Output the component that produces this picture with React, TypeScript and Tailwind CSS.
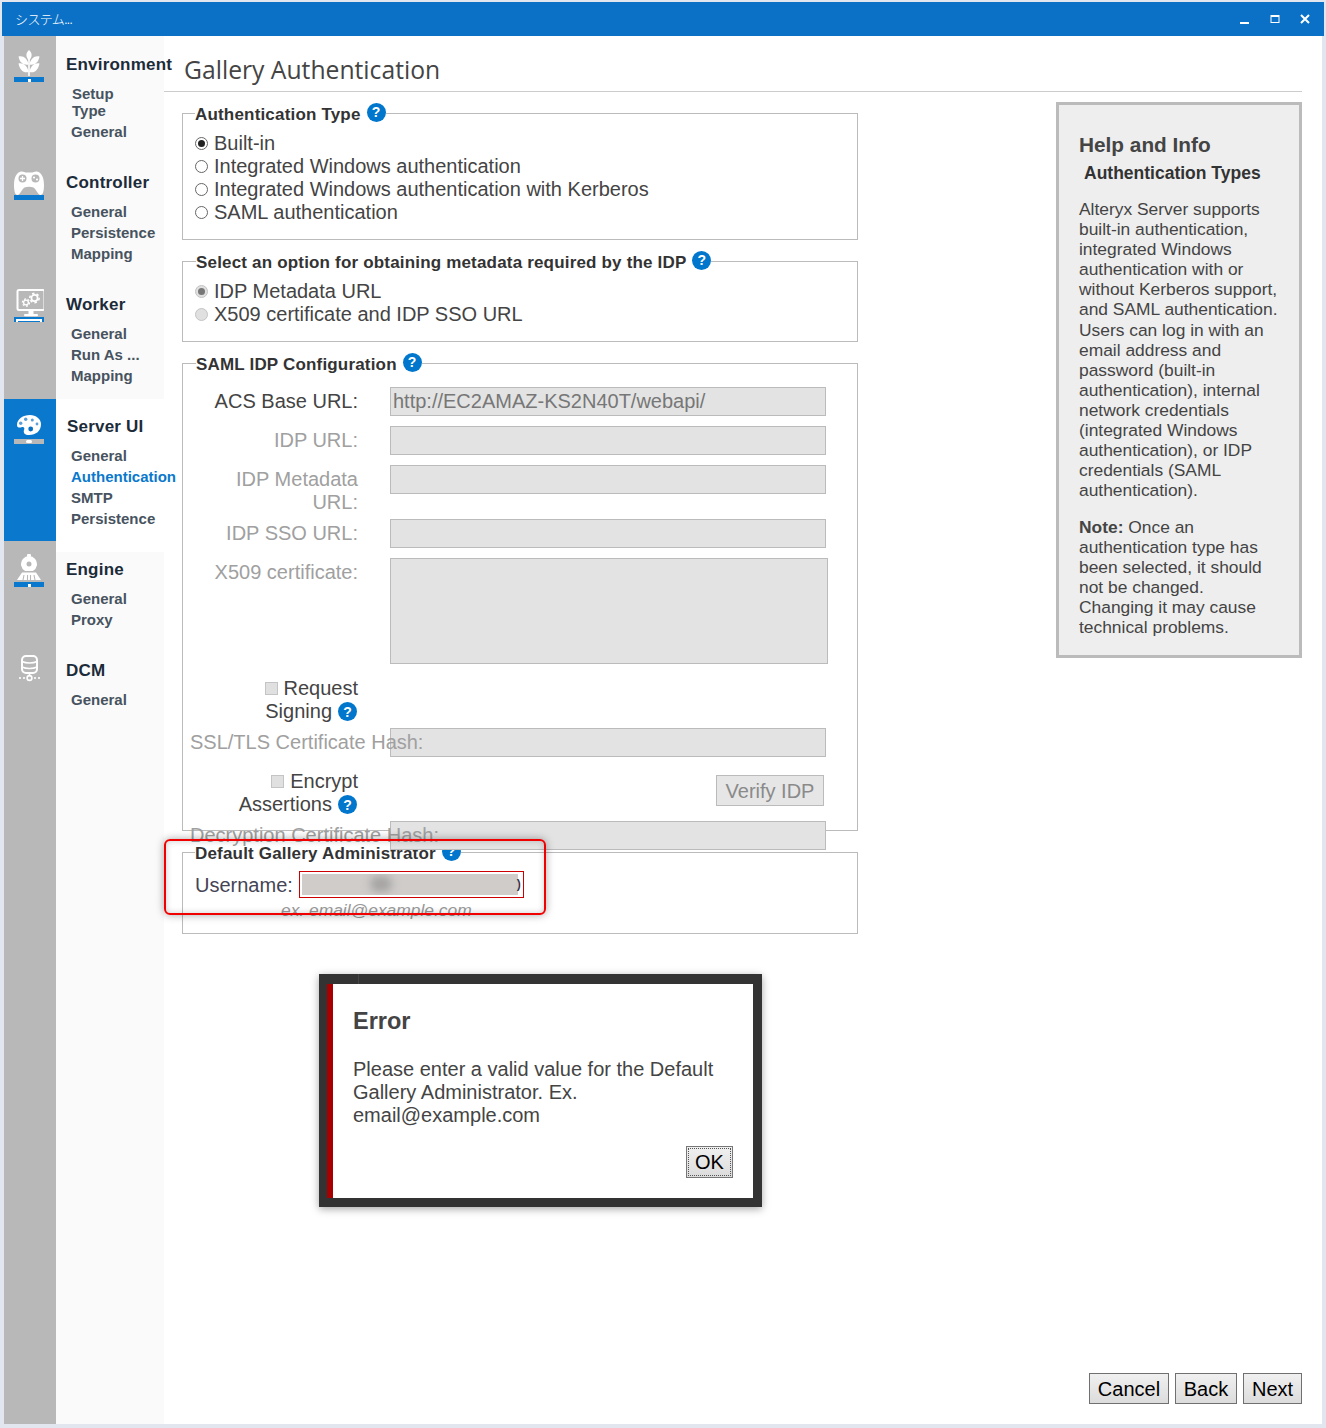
import type { ReactNode } from "react";

const FONT = "font-['Liberation_Sans',Arial,sans-serif]";

function PlantIcon() {
  return (
    <svg width="30" height="27" viewBox="0 0 30 27" fill="white">
      <rect x="14.2" y="6" width="1.6" height="20" />
      <path d="M15 0 C18.5 3 18.5 7 15 10.5 C11.5 7 11.5 3 15 0Z" />
      <path d="M4.5 6.5 C9 5 13.5 8.5 14.6 14.5 C9.5 15.5 5.5 12.5 4.5 6.5Z" />
      <path d="M25.5 6.5 C21 5 16.5 8.5 15.4 14.5 C20.5 15.5 24.5 12.5 25.5 6.5Z" />
      <path d="M4.5 13.5 C9 12.5 13.5 16 14.6 22 C9.5 23.5 5.5 19.5 4.5 13.5Z" />
      <path d="M25.5 13.5 C21 12.5 16.5 16 15.4 22 C20.5 23.5 24.5 19.5 25.5 13.5Z" />
    </svg>
  );
}

function PadIcon() {
  return (
    <svg width="30" height="24" viewBox="0 0 30 24">
      <path
        fill="white"
        d="M7 .5 C9 0 11 1.5 12.5 1.5 H17.5 C19 1.5 21 0 23 .5 C27 1 30 6 30 14 C30 20 29 24 26.5 24 C24 24 22 18 19.5 16.5 C17 15.5 13 15.5 10.5 16.5 C8 18 6 24 3.5 24 C1 24 0 20 0 14 C0 6 3 1 7 .5Z"
      />
      <circle cx="8.5" cy="7.5" r="4" fill="#b8b8b8" />
      <circle cx="21.5" cy="7.5" r="4" fill="#b8b8b8" />
      <path d="M6 7.5 H11 M8.5 5 V10" stroke="white" strokeWidth="1.3" />
      <circle cx="20" cy="6.5" r="1.1" fill="white" />
      <circle cx="23" cy="8.5" r="1.1" fill="white" />
    </svg>
  );
}

function Gear({ x, y, r }: { x: number; y: number; r: number }) {
  return (
    <g fill="none" stroke="white">
      <circle cx={x} cy={y} r={r} strokeWidth={r * 0.55} />
      <circle cx={x} cy={y} r={r + r * 0.5} strokeWidth={r * 0.5} strokeDasharray={`${r * 0.8} ${r * 0.72}`} />
    </g>
  );
}

function MonitorIcon() {
  return (
    <svg width="30" height="28" viewBox="0 0 30 28">
      <rect x="3.5" y="1" width="27" height="20" rx="1.5" fill="none" stroke="white" strokeWidth="2" />
      <rect x="14.5" y="22" width="5" height="3" fill="white" />
      <rect x="10" y="25" width="14" height="2.2" rx="1" fill="white" />
      <Gear x={20.5} y={9} r={3.1} />
      <Gear x={12} y={13.5} r={2.4} />
    </svg>
  );
}

function PaletteIcon() {
  return (
    <svg width="30" height="22" viewBox="-3 0 30 22">
      <path
        fill="white"
        d="M13 0 C6 0 0 4 0 10 C0 13 3 13 5 12 C7 11.5 8 13 7 15 C6 18 8 20 12 20 C19 20 24 16 24 9 C24 4 19 0 13 0Z"
      />
      <circle cx="3.7" cy="8.3" r="1.7" fill="#5a9fd8" />
      <circle cx="8.7" cy="4.3" r="1.7" fill="#5a9fd8" />
      <circle cx="15.3" cy="5" r="1.5" fill="#5a9fd8" />
      <circle cx="20" cy="9" r="1.4" fill="#5a9fd8" />
      <circle cx="13.7" cy="14" r="2.4" fill="#0a70c4" />
    </svg>
  );
}

function TrainIcon() {
  return (
    <svg width="30" height="28" viewBox="-3 0 30 28">
      <rect x="10" y="0" width="4" height="3" rx="1" fill="white" />
      <path d="M8.1 17 A8 8 0 1 1 15.9 17 Z" fill="white" />
      <circle cx="12" cy="10" r="2.5" fill="#b8b8b8" />
      <path d="M5 18.5 H19 L24 26 H0Z" fill="white" />
      <path d="M7 21 L6 26 M10.5 21 V26 M13.5 21 V26 M17 21 L18 26" stroke="#b8b8b8" strokeWidth="1.1" />
    </svg>
  );
}

function DbIcon() {
  return (
    <svg width="30" height="27" viewBox="-3 0 30 27" fill="none" stroke="white">
      <rect x="5" y="1" width="15" height="17" rx="4" strokeWidth="2" />
      <path d="M5 6.5 C9 8.5 16 8.5 20 6.5 M5 12 C9 14 16 14 20 12" strokeWidth="1.6" />
      <path d="M12.5 18 V21" strokeWidth="1.6" />
      <circle cx="12.5" cy="23" r="2.4" strokeWidth="1.6" />
      <g fill="white" stroke="none">
        <circle cx="3" cy="23" r="1.1" />
        <circle cx="7" cy="23" r="1.1" />
        <circle cx="18" cy="23" r="1.1" />
        <circle cx="22" cy="23" r="1.1" />
      </g>
    </svg>
  );
}

function RailBar({ kind, gray }: { kind: "none" | "dot" | "screen" | "ellipse"; gray?: boolean }) {
  return (
    <div className={`relative h-[5px] w-[30px] overflow-hidden ${gray ? "bg-[#b8b8b8]" : "bg-[#0a78cc]"}`}>
      {kind === "dot" && <div className="mx-auto mt-[2px] h-[3px] w-[3px] bg-white" />}
      {kind === "ellipse" && <div className="mx-auto mt-[1px] h-[3px] w-[6px] rounded-full bg-white" />}
      {kind === "screen" && <div className="mx-auto mt-[2px] h-[6px] w-[26px] border-2 border-white" />}
    </div>
  );
}

type Group = {
  title: string;
  height: string;
  railPad: string;
  navPad: string;
  icon: ReactNode;
  bar?: "none" | "dot" | "screen" | "ellipse";
  items: string[];
};

const groups: Group[] = [
  { title: "Environment", height: "h-[122px]", railPad: "pt-[14px]", navPad: "pt-[19px]", icon: <PlantIcon />, bar: "dot", items: ["Setup Type", "General"] },
  { title: "Controller", height: "h-[122px]", railPad: "pt-[13px]", navPad: "pt-[15px]", icon: <PadIcon />, bar: "none", items: ["General", "Persistence", "Mapping"] },
  { title: "Worker", height: "h-[119px]", railPad: "pt-[9px]", navPad: "pt-[15px]", icon: <MonitorIcon />, bar: "screen", items: ["General", "Run As ...", "Mapping"] },
  { title: "Server UI", height: "h-[142px]", railPad: "pt-[16px]", navPad: "pt-[18px]", icon: <PaletteIcon />, bar: "ellipse", items: ["General", "Authentication", "SMTP", "Persistence"] },
  { title: "Engine", height: "h-[101px]", railPad: "pt-[13px]", navPad: "pt-[8px]", icon: <TrainIcon />, bar: "dot", items: ["General", "Proxy"] },
  { title: "DCM", height: "flex-1", railPad: "pt-[13px]", navPad: "pt-[19px]", icon: <DbIcon />, items: ["General"] },
];

function SideNav() {
  return (
    <div className="flex w-[160px] shrink-0 flex-col">
      {groups.map((g) => {
        const active = g.title === "Server UI";
        return (
          <div key={g.title} className={`flex ${g.height}`}>
            <div className={`flex w-[52px] shrink-0 flex-col pl-[10px] ${g.railPad} ${active ? "bg-[#0a78cc]" : "bg-[#b8b8b8]"}`}>
              {g.icon}
              {active && <div className="h-[2px]" />}
              {g.bar && <RailBar kind={g.bar} gray={active} />}
            </div>
            <div
              className={`w-[108px] ${g.navPad} ${active ? "bg-white pl-[11px]" : "bg-[#fafafa] pl-[10px]"} ${
                g.title === "Engine" ? "border-t-[11px] border-white" : ""
              }`}
            >
              <div className="h-5 whitespace-nowrap text-[17px] font-bold leading-5 tracking-[0.2px] text-[#1c2b39]">{g.title}</div>
              <div className={`mt-[8px] ${active ? "-ml-[1px]" : ""} pl-[5px]`}>
                {g.items.map((item) =>
                  item === "Setup Type" ? (
                    <div key={item} className="mb-[2px] pl-[1px] pt-[2px] text-[15px] font-bold leading-[17px] text-[#47535f]">
                      Setup
                      <br />
                      Type
                    </div>
                  ) : (
                    <div
                      key={item}
                      className={`h-[21px] whitespace-nowrap text-[15px] font-bold leading-[21px] ${
                        item === "Authentication" ? "text-[#0a78cc]" : "text-[#47535f]"
                      }`}
                    >
                      {item}
                    </div>
                  ),
                )}
              </div>
            </div>
          </div>
        );
      })}
    </div>
  );
}

function Help() {
  return (
    <span className="inline-flex h-[19px] w-[19px] shrink-0 items-center justify-center rounded-full bg-[#0077cc] text-[14px] font-bold leading-none text-white">
      ?
    </span>
  );
}

function Box({ title, className, legendClass, children }: { title: string; className: string; legendClass?: string; children: ReactNode }) {
  return (
    <fieldset className={`mt-[11px] w-[676px] border border-[#bbbbbb] ${className}`}>
      <legend className={`flex h-5 items-center gap-[6px] whitespace-nowrap text-[17px] font-bold tracking-[0.18px] text-[#333] ${legendClass ?? "ml-[12px]"}`}>
        <span className="translate-y-[2px]">{title}</span>
        <span className="flex -translate-y-[1px]">
          <Help />
        </span>
      </legend>
      {children}
    </fieldset>
  );
}

function Radio({ label, checked, disabled }: { label: string; checked?: boolean; disabled?: boolean }) {
  return (
    <div className="flex h-[23px] items-center pl-[12px] text-[20px] leading-[23px] text-[#444]">
      <span
        className={`mr-[6px] flex h-[13px] w-[13px] items-center justify-center rounded-full border ${
          disabled ? "border-[#c4c4c4] bg-[#e0e0e0]" : "border-[#666] bg-white"
        }`}
      >
        {checked && <span className={`h-[7px] w-[7px] rounded-full ${disabled ? "bg-[#777]" : "bg-[#222]"}`} />}
      </span>
      {label}
    </div>
  );
}

function Field({ label, value, className, enabled }: { label: string; value?: string; className?: string; enabled?: boolean }) {
  return (
    <div className={`flex items-start ${className ?? ""}`}>
      <div className={`w-[175px] shrink-0 pl-[20px] pt-[3px] text-right text-[20px] leading-[23px] ${enabled ? "text-[#444]" : "text-[#a0a0a0]"}`}>{label}</div>
      <input
        readOnly
        value={value ?? ""}
        className="ml-[32px] h-[29px] w-[436px] border border-[#bbbbbb] bg-[#e3e3e3] px-[2px] pb-[2px] text-[20px] text-[#777]"
      />
    </div>
  );
}

function WideField({ label, className }: { label: string; className?: string }) {
  return (
    <div className={`relative flex items-start ${className ?? ""}`}>
      <input readOnly value="" className="ml-[207px] h-[29px] w-[436px] border border-[#bbbbbb] bg-[#e3e3e3]" />
      <div className="absolute left-[7px] top-[3px] whitespace-nowrap text-[20px] leading-[23px] text-[#a0a0a0]">{label}</div>
    </div>
  );
}

function Check({ first, second, className }: { first: string; second: string; className?: string }) {
  return (
    <div className={`w-[175px] text-right text-[20px] leading-[23px] text-[#444] ${className ?? ""}`}>
      <div className="flex items-center justify-end">
        <span className="mr-[6px] h-[13px] w-[13px] border border-[#c4c4c4] bg-[#e0e0e0]" />
        {first}
      </div>
      <div className="flex items-center justify-end gap-[6px] pr-[1px]">
        {second}
        <Help />
      </div>
    </div>
  );
}

function FootButton({ label, className }: { label: string; className: string }) {
  return (
    <button className={`h-[31px] border border-[#707070] bg-gradient-to-b from-[#f0f0f0] to-[#dcdcdc] text-[20px] leading-none text-black ${className}`}>
      {label}
    </button>
  );
}

function HelpPanel() {
  return (
    <aside className="mt-[10px] ml-[198px] h-[556px] w-[246px] border-[3px] border-[#bbbbbb] bg-[#eeeeee] pl-[20px] pt-[27px]">
      <h2 className="text-[20.8px] font-bold leading-[26px] text-[#444]">Help and Info</h2>
      <h3 className="mt-[3px] pl-[5px] text-[17.5px] font-bold leading-[24px] text-[#333]">Authentication Types</h3>
      <p className="mt-[14px] w-[200px] text-[17.4px] leading-[20.1px] text-[#444]">
        Alteryx Server supports built-in authentication, integrated Windows authentication with or without Kerberos support, and SAML authentication. Users can log in with an email address and password (built-in authentication), internal network credentials (integrated Windows authentication), or IDP credentials (SAML authentication).
      </p>
      <p className="mt-[17px] w-[200px] text-[17.4px] leading-[20px] text-[#444]">
        <b>Note:</b> Once an authentication type has been selected, it should not be changed. Changing it may cause technical problems.
      </p>
    </aside>
  );
}

export default function App() {
  return (
    <div className={`relative h-[1428px] w-[1326px] overflow-hidden bg-[#e1e6ef] pt-[2px] ${FONT}`}>
      <header className="mx-[2px] flex h-[34px] items-center justify-between bg-[#0b71c6] pl-[13px] pr-[14px] text-white">
        <span className="font-['Noto_Sans_CJK_JP',sans-serif] text-[13px] font-light tracking-[-0.6px]">システム...</span>
        <div className="flex items-center gap-[20px]">
          <svg width="10" height="10" viewBox="0 0 10 10" className="mt-[2px]"><rect x="0" y="7" width="9" height="2" fill="white" /></svg>
          <svg width="10" height="10" viewBox="0 0 10 10"><rect x="1" y="1.5" width="8" height="7" fill="none" stroke="white" strokeWidth="1" /><rect x="1" y="1" width="8" height="2" fill="white" /></svg>
          <svg width="10" height="10" viewBox="0 0 10 10"><path d="M1 1 L9 9 M9 1 L1 9" stroke="white" strokeWidth="2" /></svg>
        </div>
      </header>

      <div className="mx-[4px] flex h-[1388px] bg-white">
        <SideNav />
        <main className="flex min-w-0 flex-1 flex-col">
          <div className="h-[56px] w-[1138px] border-b border-[#cccccc] pl-[20px] pt-[14px] font-['Open_Sans',sans-serif] text-[24.7px] leading-[40px] text-[#444]">
            Gallery Authentication
          </div>
          <div className="flex pl-[18px]">
            <div className="w-[676px] shrink-0">
              <Box title="Authentication Type" className="h-[137px] pt-[9px]">
                <Radio label="Built-in" checked />
                <Radio label="Integrated Windows authentication" />
                <Radio label="Integrated Windows authentication with Kerberos" />
                <Radio label="SAML authentication" />
              </Box>
              <Box title="Select an option for obtaining metadata required by the IDP" legendClass="ml-[13px]" className="h-[91px] pt-[9px]">
                <Radio label="IDP Metadata URL" checked disabled />
                <Radio label="X509 certificate and IDP SSO URL" disabled />
              </Box>
              <Box title="SAML IDP Configuration" legendClass="ml-[13px]" className="relative z-10 h-[478px] pt-[14px]">
                <Field label="ACS Base URL:" value="http://EC2AMAZ-KS2N40T/webapi/" enabled />
                <Field label="IDP URL:" className="mt-[10px]" />
                <Field label="IDP Metadata URL:" className="mt-[10px] h-[44px]" />
                <Field label="IDP SSO URL:" className="mt-[10px]" />
                <div className="mt-[10px] flex items-start">
                  <div className="w-[175px] shrink-0 pt-[3px] text-right text-[20px] leading-[23px] text-[#a0a0a0]">X509 certificate:</div>
                  <textarea readOnly className="ml-[32px] h-[106px] w-[438px] resize-none border border-[#bbbbbb] bg-[#e3e3e3]" />
                </div>
                <Check first="Request" second="Signing" className="mt-[13px]" />
                <WideField label="SSL/TLS Certificate Hash:" className="mt-[5px]" />
                <div className="mt-[13px] flex items-start">
                  <Check first="Encrypt" second="Assertions" />
                  <button className="ml-[358px] mt-[5px] h-[31px] w-[108px] border border-[#bbbbbb] bg-[#e6e6e6] text-[20px] leading-none text-[#8a8a8a]">Verify IDP</button>
                </div>
                <WideField label="Decryption Certificate Hash:" className="mt-[5px]" />
              </Box>
              <Box title="Default Gallery Administrator" className="h-[92px]">
                <div className="ml-[12px] mt-[9px] flex items-center">
                  <span className="text-[20px] leading-[26px] text-[#445]">Username:</span>
                  <div className="relative ml-[6px] h-[27px] w-[225px] overflow-hidden border border-[#cc0000] bg-white p-[2px]">
                    <div className="h-full w-[216px] overflow-hidden bg-[#cfccca]">
                      <div className="ml-[68px] mt-[2px] h-[16px] w-[22px] rounded-full bg-[#a5a3a2] blur-[4px]" />
                    </div>
                    <span className="absolute right-[2px] top-[3px] text-[12px] font-bold leading-[18px] text-[#334]">)</span>
                  </div>
                </div>
                <div className="ml-[98px] mt-[2px] whitespace-nowrap text-[17.4px] italic leading-[20px] text-[#999]">ex. email@example.com</div>
              </Box>
            </div>
            <HelpPanel />
          </div>
          <div className="mt-auto flex justify-end gap-[6px] pb-[20px] pr-[20px]">
            <FootButton label="Cancel" className="w-[80px]" />
            <FootButton label="Back" className="w-[62px]" />
            <FootButton label="Next" className="w-[59px]" />
          </div>
        </main>
      </div>

      {/* red annotation drawn over the screenshot */}
      <div className="absolute left-[164px] top-[839px] z-20 h-[76px] w-[382px] rounded-[6px] border-2 border-[#f00000] shadow-[0_0_8px_rgba(0,0,0,0.35),inset_0_0_6px_rgba(0,0,0,0.2)]" />

      {/* error dialog */}
      <div className="absolute left-[319px] top-[974px] z-30 h-[233px] w-[443px] bg-[#333333] pb-[9px] pl-[8px] pr-[9px] pt-[10px] shadow-[0_2px_8px_rgba(0,0,0,0.35)]">
        <div className="absolute left-[39px] top-0 h-[10px] w-px bg-[#444]" />
        <div className="flex h-full border-l-[6px] border-[#a80000] bg-white">
          <div className="flex-1 pl-[20px] pr-[20px] pt-[23px] text-[#444]">
            <div className="text-[23.5px] font-bold leading-[28px]">Error</div>
            <p className="mt-[23px] text-[20px] leading-[23px]">
              Please enter a valid value for the Default Gallery Administrator. Ex. email@example.com
            </p>
            <div className="mt-[19px] flex justify-end">
              <button className="h-[32px] w-[47px] border border-[#777] bg-gradient-to-b from-[#f0f0f0] to-[#dcdcdc] p-[1px] text-[20px] leading-none text-black">
                <span className="flex h-full w-full items-center justify-center border border-dotted border-[#555]">OK</span>
              </button>
            </div>
          </div>
        </div>
      </div>
    </div>
  );
}
